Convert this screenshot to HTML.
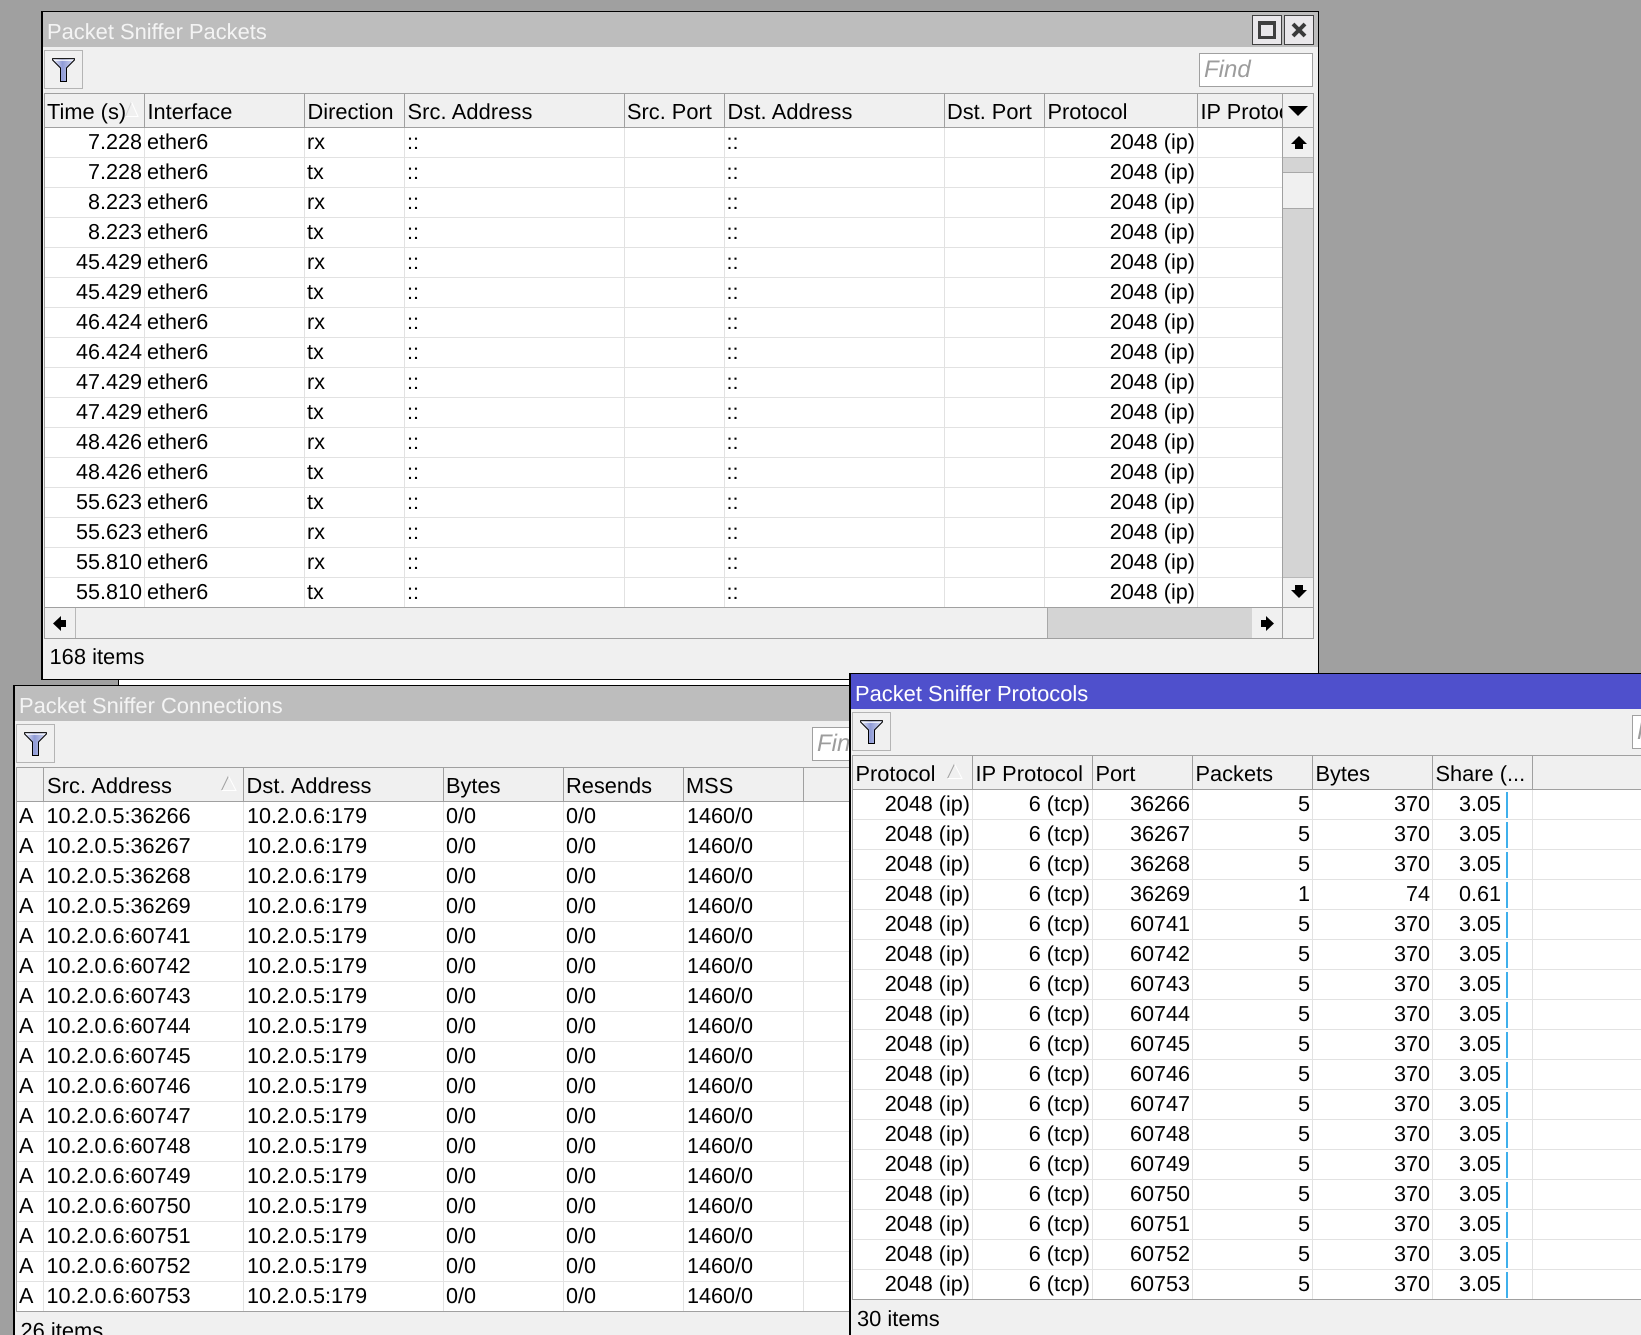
<!DOCTYPE html>
<html><head><meta charset="utf-8"><title>Packet Sniffer</title>
<style>
html{margin:0;padding:0;background:#a0a0a0;overflow:hidden;width:1641px;height:1335px}
body{margin:0;padding:0;background:#a0a0a0;position:relative;width:1641px;height:1335px;overflow:hidden;font:21.6px/30px "Liberation Sans",Arial,sans-serif;color:#000;text-rendering:geometricPrecision}
div,i,b,span,svg{position:absolute;display:block;box-sizing:border-box}
b{font-weight:normal;white-space:nowrap;top:0;line-height:28px}
i{font-style:normal}
.p{background:#f0f0f0}
.k{background:#000}
.tt{white-space:nowrap;font-size:21.9px}
.h{background:#f0f0f0;border-top:1px solid #a0a0a0;border-bottom:1px solid #a0a0a0}
.v{width:1px;background:#a0a0a0}
.l{width:1px;background:#e2e2e2}
.t{white-space:nowrap;line-height:30px}
.hd{font-size:21.8px}
.st{font-size:21.9px}
.ad{letter-spacing:.12px}
.w{background:#fff}
.r{height:30px;border-bottom:1px solid #e2e2e2}
.btn{width:39px;height:39px;border:1px solid #b4b4b4;background:#f0f0f0}
.f{background:#fff;border:1px solid #a0a0a0;overflow:hidden}
.f span{left:4px;top:1px;font-style:italic;font-size:24px;line-height:30px;color:#9c9c9c}
.a{left:45px;width:97px;text-align:right}.b{left:147px}.c{left:307px}.d{left:407px}.e{left:726.5px}.o1{left:1044px;width:151px;text-align:right}
.g{left:19px}.m{left:46.5px}.n{left:247px}.q{left:446px}.s{left:566px}.u{left:687px}
.pa{left:853px;width:117px;text-align:right}.pb{left:973px;width:117px;text-align:right}.pc{left:1093px;width:97px;text-align:right}.pd{left:1193px;width:117px;text-align:right}.pe{left:1313px;width:117px;text-align:right}.pf{left:1433px;width:68px;text-align:right}
.bar{left:1506px;top:2px;width:2px;height:26px;background:#3fb0ec}
</style></head><body>

<svg width="0" height="0" style="left:0;top:0"><defs>
<linearGradient id="fg" x1="0" x2="1" y1="0" y2="0"><stop offset="0" stop-color="#eceefa"/><stop offset=".45" stop-color="#8f9bd6"/><stop offset="1" stop-color="#d5daf1"/></linearGradient>
<symbol id="fi" viewBox="0 0 24 25"><path d="M.6.6H22.4V2L14.5 10V23.5H8.5V10L.6 2Z" fill="url(#fg)" stroke="#000" stroke-width="1"/><path d="M2 2.2H21" stroke="#fff" stroke-width="1.2"/></symbol>
</defs></svg>

<!-- WINDOW 1 -->
<div class="k" style="left:41px;top:11px;width:1278px;height:669px"></div>
<div class="p" style="left:43px;top:12px;width:1275px;height:667px"></div>
<div style="left:43px;top:12px;width:1275px;height:35px;background:#bdbdbd"></div>
<div class="t tt" style="left:47px;top:16.5px;color:#f4f4f4">Packet Sniffer Packets</div>
<div style="left:1252px;top:15px;width:30px;height:30px;background:#e9e7ea;border:1px solid #404040"></div>
<div style="left:1258px;top:21px;width:18px;height:18px;border:3px solid #3f3f3f;border-top-width:4px"></div>
<div style="left:1284px;top:15px;width:30px;height:30px;background:#e9e7ea;border:1px solid #404040"></div>
<svg style="left:1284px;top:15px" width="30" height="30"><path d="M9 9L21 21M21 9L9 21" stroke="#3a3a3a" stroke-width="4" fill="none"/></svg>
<div class="btn" style="left:44px;top:50px"></div>
<svg style="left:52px;top:58px" width="24" height="25"><use href="#fi"/></svg>
<div class="f" style="left:1199px;top:53px;width:114px;height:34px"><span>Find</span></div>

<div class="h" style="left:44px;top:93px;width:1270px;height:35px"></div>
<div class="v" style="left:44px;top:93px;height:515px"></div>
<div class="v" style="left:144px;top:93px;height:35px"></div>
<div class="v" style="left:304px;top:93px;height:35px"></div>
<div class="v" style="left:404px;top:93px;height:35px"></div>
<div class="v" style="left:624px;top:93px;height:35px"></div>
<div class="v" style="left:724px;top:93px;height:35px"></div>
<div class="v" style="left:944px;top:93px;height:35px"></div>
<div class="v" style="left:1044px;top:93px;height:35px"></div>
<div class="v" style="left:1197px;top:93px;height:35px"></div>
<div class="v" style="left:1282px;top:93px;height:515px"></div>
<div class="v" style="left:1313px;top:93px;height:546px"></div>
<div class="t hd" style="left:47px;top:96.5px">Time (s)</div>
<svg style="left:124px;top:100px" width="16" height="18"><path d="M1.5 16.5L7.5 2" stroke="#d4d4d4" fill="none"/><path d="M7.5 2L14 16.5H1.5" stroke="#fff" fill="none"/></svg>
<div class="t hd" style="left:147.5px;top:96.5px">Interface</div>
<div class="t hd" style="left:307.5px;top:96.5px">Direction</div>
<div class="t hd ad" style="left:407.5px;top:96.5px">Src. Address</div>
<div class="t hd" style="left:627px;top:96.5px">Src. Port</div>
<div class="t hd ad" style="left:727.5px;top:96.5px">Dst. Address</div>
<div class="t hd" style="left:947px;top:96.5px">Dst. Port</div>
<div class="t hd" style="left:1047.5px;top:96.5px">Protocol</div>
<div style="left:1200.5px;top:96.5px;width:81.5px;height:30px;overflow:hidden"><span class="t hd" style="left:0;top:0">IP Protocol</span></div>
<svg style="left:1288px;top:105px" width="20" height="12"><path d="M0 1H20L10 11Z" fill="#000"/></svg>

<div class="w" style="left:45px;top:128px;width:1237px;height:480px"></div>
<div class="r" style="left:45px;top:128px;width:1237px"></div>
<div class="r" style="left:45px;top:158px;width:1237px"></div><div class="r" style="left:45px;top:188px;width:1237px"></div><div class="r" style="left:45px;top:218px;width:1237px"></div><div class="r" style="left:45px;top:248px;width:1237px"></div><div class="r" style="left:45px;top:278px;width:1237px"></div><div class="r" style="left:45px;top:308px;width:1237px"></div><div class="r" style="left:45px;top:338px;width:1237px"></div><div class="r" style="left:45px;top:368px;width:1237px"></div><div class="r" style="left:45px;top:398px;width:1237px"></div><div class="r" style="left:45px;top:428px;width:1237px"></div><div class="r" style="left:45px;top:458px;width:1237px"></div><div class="r" style="left:45px;top:488px;width:1237px"></div><div class="r" style="left:45px;top:518px;width:1237px"></div><div class="r" style="left:45px;top:548px;width:1237px"></div>
<i class="l" style="left:144px;top:128px;height:480px"></i><i class="l" style="left:304px;top:128px;height:480px"></i><i class="l" style="left:404px;top:128px;height:480px"></i><i class="l" style="left:624px;top:128px;height:480px"></i><i class="l" style="left:724px;top:128px;height:480px"></i><i class="l" style="left:944px;top:128px;height:480px"></i><i class="l" style="left:1044px;top:128px;height:480px"></i><i class="l" style="left:1197px;top:128px;height:480px"></i>
<div style="left:0;top:128px;width:1282px;height:30px"><b class="a">7.228</b><b class="b">ether6</b><b class="c">rx</b><b class="d">::</b><b class="e">::</b><b class="o1">2048 (ip)</b></div>
<div style="left:0;top:158px;width:1282px;height:30px"><b class="a">7.228</b><b class="b">ether6</b><b class="c">tx</b><b class="d">::</b><b class="e">::</b><b class="o1">2048 (ip)</b></div>
<div style="left:0;top:188px;width:1282px;height:30px"><b class="a">8.223</b><b class="b">ether6</b><b class="c">rx</b><b class="d">::</b><b class="e">::</b><b class="o1">2048 (ip)</b></div>
<div style="left:0;top:218px;width:1282px;height:30px"><b class="a">8.223</b><b class="b">ether6</b><b class="c">tx</b><b class="d">::</b><b class="e">::</b><b class="o1">2048 (ip)</b></div>
<div style="left:0;top:248px;width:1282px;height:30px"><b class="a">45.429</b><b class="b">ether6</b><b class="c">rx</b><b class="d">::</b><b class="e">::</b><b class="o1">2048 (ip)</b></div>
<div style="left:0;top:278px;width:1282px;height:30px"><b class="a">45.429</b><b class="b">ether6</b><b class="c">tx</b><b class="d">::</b><b class="e">::</b><b class="o1">2048 (ip)</b></div>
<div style="left:0;top:308px;width:1282px;height:30px"><b class="a">46.424</b><b class="b">ether6</b><b class="c">rx</b><b class="d">::</b><b class="e">::</b><b class="o1">2048 (ip)</b></div>
<div style="left:0;top:338px;width:1282px;height:30px"><b class="a">46.424</b><b class="b">ether6</b><b class="c">tx</b><b class="d">::</b><b class="e">::</b><b class="o1">2048 (ip)</b></div>
<div style="left:0;top:368px;width:1282px;height:30px"><b class="a">47.429</b><b class="b">ether6</b><b class="c">rx</b><b class="d">::</b><b class="e">::</b><b class="o1">2048 (ip)</b></div>
<div style="left:0;top:398px;width:1282px;height:30px"><b class="a">47.429</b><b class="b">ether6</b><b class="c">tx</b><b class="d">::</b><b class="e">::</b><b class="o1">2048 (ip)</b></div>
<div style="left:0;top:428px;width:1282px;height:30px"><b class="a">48.426</b><b class="b">ether6</b><b class="c">rx</b><b class="d">::</b><b class="e">::</b><b class="o1">2048 (ip)</b></div>
<div style="left:0;top:458px;width:1282px;height:30px"><b class="a">48.426</b><b class="b">ether6</b><b class="c">tx</b><b class="d">::</b><b class="e">::</b><b class="o1">2048 (ip)</b></div>
<div style="left:0;top:488px;width:1282px;height:30px"><b class="a">55.623</b><b class="b">ether6</b><b class="c">tx</b><b class="d">::</b><b class="e">::</b><b class="o1">2048 (ip)</b></div>
<div style="left:0;top:518px;width:1282px;height:30px"><b class="a">55.623</b><b class="b">ether6</b><b class="c">rx</b><b class="d">::</b><b class="e">::</b><b class="o1">2048 (ip)</b></div>
<div style="left:0;top:548px;width:1282px;height:30px"><b class="a">55.810</b><b class="b">ether6</b><b class="c">rx</b><b class="d">::</b><b class="e">::</b><b class="o1">2048 (ip)</b></div>
<div style="left:0;top:578px;width:1282px;height:30px"><b class="a">55.810</b><b class="b">ether6</b><b class="c">tx</b><b class="d">::</b><b class="e">::</b><b class="o1">2048 (ip)</b></div>

<!-- v scrollbar -->
<div style="left:1283px;top:128px;width:30px;height:480px;background:#d4d4d4"></div>
<div class="p" style="left:1283px;top:128px;width:30px;height:30px;border-bottom:1px solid #b8b8b8"></div>
<svg style="left:1291px;top:136px" width="16" height="13"><path d="M8 0L16 8H12V13H4V8H0Z" fill="#000"/></svg>
<div class="p" style="left:1283px;top:172px;width:30px;height:37px;border-top:1px solid #a8a8a8;border-bottom:1px solid #a8a8a8"></div>
<div class="p" style="left:1283px;top:577px;width:30px;height:31px;border-top:1px solid #b8b8b8"></div>
<svg style="left:1291px;top:585px" width="16" height="13"><path d="M4 0H12V5H16L8 13L0 5H4Z" fill="#000"/></svg>
<!-- h scrollbar -->
<div class="v" style="left:44px;top:607px;width:1270px;height:1px"></div>
<div class="v" style="left:44px;top:638px;width:1270px;height:1px"></div>
<div class="v" style="left:44px;top:607px;height:32px"></div>
<div style="left:75px;top:608px;width:1px;height:30px;background:#b8b8b8"></div>
<svg style="left:53px;top:616px" width="13" height="15"><path d="M0 7.5L8 0V4H13V11H8V15Z" fill="#000"/></svg>
<div style="left:1047px;top:608px;width:205px;height:30px;background:#d4d4d4;border-left:1px solid #a8a8a8"></div>
<div style="left:1282px;top:608px;width:1px;height:30px;background:#a0a0a0"></div>
<svg style="left:1261px;top:616px" width="13" height="15"><path d="M13 7.5L5 0V4H0V11H5V15Z" fill="#000"/></svg>
<div class="t st" style="left:49.5px;top:642px">168 items</div>

<!-- gap strip behind -->
<div style="left:119px;top:680px;width:740px;height:6px;background:#fff"></div>
<div class="k" style="left:118px;top:680px;width:1px;height:6px"></div>

<!-- WINDOW 2 -->
<div class="k" style="left:13px;top:685px;width:860px;height:650px"></div>
<div class="p" style="left:15px;top:686px;width:858px;height:649px"></div>
<div style="left:15px;top:686px;width:858px;height:35px;background:#bdbdbd"></div>
<div class="t tt" style="left:19px;top:691px;color:#f4f4f4">Packet Sniffer Connections</div>
<div class="btn" style="left:16px;top:724px"></div>
<svg style="left:24px;top:732px" width="24" height="25"><use href="#fi"/></svg>
<div class="f" style="left:812px;top:727px;width:60px;height:34px"><span>Find</span></div>

<div class="h" style="left:16px;top:767px;width:850px;height:35px"></div>
<div class="v" style="left:16px;top:767px;height:545px"></div>
<div class="v" style="left:43px;top:767px;height:35px"></div>
<div class="v" style="left:243px;top:767px;height:35px"></div>
<div class="v" style="left:443px;top:767px;height:35px"></div>
<div class="v" style="left:563px;top:767px;height:35px"></div>
<div class="v" style="left:683px;top:767px;height:35px"></div>
<div class="v" style="left:803px;top:767px;height:35px"></div>
<div class="t hd ad" style="left:47px;top:771px">Src. Address</div>
<svg style="left:220px;top:774px" width="18" height="18"><path d="M1.5 16.5L8.5 2" stroke="#a0a0a0" fill="none"/><path d="M8.5 2L16 16.5H1.5" stroke="#fff" fill="none"/></svg>
<div class="t hd ad" style="left:246.5px;top:771px">Dst. Address</div>
<div class="t hd" style="left:446px;top:771px">Bytes</div>
<div class="t hd" style="left:566px;top:771px">Resends</div>
<div class="t hd" style="left:686px;top:771px">MSS</div>

<div class="w" style="left:17px;top:802px;width:850px;height:510px"></div>
<div class="r" style="left:17px;top:802px;width:850px"></div><div class="r" style="left:17px;top:832px;width:850px"></div><div class="r" style="left:17px;top:862px;width:850px"></div><div class="r" style="left:17px;top:892px;width:850px"></div><div class="r" style="left:17px;top:922px;width:850px"></div><div class="r" style="left:17px;top:952px;width:850px"></div><div class="r" style="left:17px;top:982px;width:850px"></div><div class="r" style="left:17px;top:1012px;width:850px"></div><div class="r" style="left:17px;top:1042px;width:850px"></div><div class="r" style="left:17px;top:1072px;width:850px"></div><div class="r" style="left:17px;top:1102px;width:850px"></div><div class="r" style="left:17px;top:1132px;width:850px"></div><div class="r" style="left:17px;top:1162px;width:850px"></div><div class="r" style="left:17px;top:1192px;width:850px"></div><div class="r" style="left:17px;top:1222px;width:850px"></div><div class="r" style="left:17px;top:1252px;width:850px"></div>
<i class="l" style="left:43px;top:802px;height:510px"></i><i class="l" style="left:243px;top:802px;height:510px"></i><i class="l" style="left:443px;top:802px;height:510px"></i><i class="l" style="left:563px;top:802px;height:510px"></i><i class="l" style="left:683px;top:802px;height:510px"></i><i class="l" style="left:803px;top:802px;height:510px"></i>
<div class="v" style="left:16px;top:1311px;width:850px;height:1px"></div>
<div style="left:0;top:802px;height:30px;width:840px"><b class="g">A</b><b class="m">10.2.0.5:36266</b><b class="n">10.2.0.6:179</b><b class="q">0/0</b><b class="s">0/0</b><b class="u">1460/0</b></div>
<div style="left:0;top:832px;height:30px;width:840px"><b class="g">A</b><b class="m">10.2.0.5:36267</b><b class="n">10.2.0.6:179</b><b class="q">0/0</b><b class="s">0/0</b><b class="u">1460/0</b></div>
<div style="left:0;top:862px;height:30px;width:840px"><b class="g">A</b><b class="m">10.2.0.5:36268</b><b class="n">10.2.0.6:179</b><b class="q">0/0</b><b class="s">0/0</b><b class="u">1460/0</b></div>
<div style="left:0;top:892px;height:30px;width:840px"><b class="g">A</b><b class="m">10.2.0.5:36269</b><b class="n">10.2.0.6:179</b><b class="q">0/0</b><b class="s">0/0</b><b class="u">1460/0</b></div>
<div style="left:0;top:922px;height:30px;width:840px"><b class="g">A</b><b class="m">10.2.0.6:60741</b><b class="n">10.2.0.5:179</b><b class="q">0/0</b><b class="s">0/0</b><b class="u">1460/0</b></div>
<div style="left:0;top:952px;height:30px;width:840px"><b class="g">A</b><b class="m">10.2.0.6:60742</b><b class="n">10.2.0.5:179</b><b class="q">0/0</b><b class="s">0/0</b><b class="u">1460/0</b></div>
<div style="left:0;top:982px;height:30px;width:840px"><b class="g">A</b><b class="m">10.2.0.6:60743</b><b class="n">10.2.0.5:179</b><b class="q">0/0</b><b class="s">0/0</b><b class="u">1460/0</b></div>
<div style="left:0;top:1012px;height:30px;width:840px"><b class="g">A</b><b class="m">10.2.0.6:60744</b><b class="n">10.2.0.5:179</b><b class="q">0/0</b><b class="s">0/0</b><b class="u">1460/0</b></div>
<div style="left:0;top:1042px;height:30px;width:840px"><b class="g">A</b><b class="m">10.2.0.6:60745</b><b class="n">10.2.0.5:179</b><b class="q">0/0</b><b class="s">0/0</b><b class="u">1460/0</b></div>
<div style="left:0;top:1072px;height:30px;width:840px"><b class="g">A</b><b class="m">10.2.0.6:60746</b><b class="n">10.2.0.5:179</b><b class="q">0/0</b><b class="s">0/0</b><b class="u">1460/0</b></div>
<div style="left:0;top:1102px;height:30px;width:840px"><b class="g">A</b><b class="m">10.2.0.6:60747</b><b class="n">10.2.0.5:179</b><b class="q">0/0</b><b class="s">0/0</b><b class="u">1460/0</b></div>
<div style="left:0;top:1132px;height:30px;width:840px"><b class="g">A</b><b class="m">10.2.0.6:60748</b><b class="n">10.2.0.5:179</b><b class="q">0/0</b><b class="s">0/0</b><b class="u">1460/0</b></div>
<div style="left:0;top:1162px;height:30px;width:840px"><b class="g">A</b><b class="m">10.2.0.6:60749</b><b class="n">10.2.0.5:179</b><b class="q">0/0</b><b class="s">0/0</b><b class="u">1460/0</b></div>
<div style="left:0;top:1192px;height:30px;width:840px"><b class="g">A</b><b class="m">10.2.0.6:60750</b><b class="n">10.2.0.5:179</b><b class="q">0/0</b><b class="s">0/0</b><b class="u">1460/0</b></div>
<div style="left:0;top:1222px;height:30px;width:840px"><b class="g">A</b><b class="m">10.2.0.6:60751</b><b class="n">10.2.0.5:179</b><b class="q">0/0</b><b class="s">0/0</b><b class="u">1460/0</b></div>
<div style="left:0;top:1252px;height:30px;width:840px"><b class="g">A</b><b class="m">10.2.0.6:60752</b><b class="n">10.2.0.5:179</b><b class="q">0/0</b><b class="s">0/0</b><b class="u">1460/0</b></div>
<div style="left:0;top:1282px;height:30px;width:840px"><b class="g">A</b><b class="m">10.2.0.6:60753</b><b class="n">10.2.0.5:179</b><b class="q">0/0</b><b class="s">0/0</b><b class="u">1460/0</b></div>
<div class="t st" style="left:20.5px;top:1316px">26 items</div>

<!-- WINDOW 3 -->
<div class="k" style="left:849px;top:673px;width:792px;height:662px"></div>
<div class="p" style="left:851px;top:674px;width:790px;height:661px"></div>
<div style="left:851px;top:674px;width:790px;height:35px;background:#4f50cc"></div>
<div class="t tt" style="left:855px;top:679px;color:#fff">Packet Sniffer Protocols</div>
<div class="btn" style="left:852px;top:712px"></div>
<svg style="left:860px;top:720px" width="24" height="25"><use href="#fi"/></svg>
<div class="f" style="left:1632px;top:715px;width:20px;height:34px"><span>Find</span></div>

<div class="h" style="left:852px;top:755px;width:789px;height:35px"></div>
<div class="v" style="left:852px;top:755px;height:545px"></div>
<div class="v" style="left:972px;top:755px;height:35px"></div>
<div class="v" style="left:1092px;top:755px;height:35px"></div>
<div class="v" style="left:1192px;top:755px;height:35px"></div>
<div class="v" style="left:1312px;top:755px;height:35px"></div>
<div class="v" style="left:1432px;top:755px;height:35px"></div>
<div class="v" style="left:1532px;top:755px;height:35px"></div>
<div class="t hd" style="left:855.5px;top:759px">Protocol</div>
<svg style="left:946px;top:762px" width="18" height="18"><path d="M1.5 16.5L8.5 2" stroke="#a0a0a0" fill="none"/><path d="M8.5 2L16 16.5H1.5" stroke="#fff" fill="none"/></svg>
<div class="t hd ad" style="left:975.5px;top:759px">IP Protocol</div>
<div class="t hd" style="left:1095.5px;top:759px">Port</div>
<div class="t hd" style="left:1195.5px;top:759px">Packets</div>
<div class="t hd" style="left:1315.5px;top:759px">Bytes</div>
<div class="t hd" style="left:1435.5px;top:759px">Share (...</div>

<div class="w" style="left:853px;top:790px;width:788px;height:510px"></div>
<div class="r" style="left:853px;top:790px;width:788px"></div><div class="r" style="left:853px;top:820px;width:788px"></div><div class="r" style="left:853px;top:850px;width:788px"></div><div class="r" style="left:853px;top:880px;width:788px"></div><div class="r" style="left:853px;top:910px;width:788px"></div><div class="r" style="left:853px;top:940px;width:788px"></div><div class="r" style="left:853px;top:970px;width:788px"></div><div class="r" style="left:853px;top:1000px;width:788px"></div><div class="r" style="left:853px;top:1030px;width:788px"></div><div class="r" style="left:853px;top:1060px;width:788px"></div><div class="r" style="left:853px;top:1090px;width:788px"></div><div class="r" style="left:853px;top:1120px;width:788px"></div><div class="r" style="left:853px;top:1150px;width:788px"></div><div class="r" style="left:853px;top:1180px;width:788px"></div><div class="r" style="left:853px;top:1210px;width:788px"></div><div class="r" style="left:853px;top:1240px;width:788px"></div>
<i class="l" style="left:972px;top:790px;height:510px"></i><i class="l" style="left:1092px;top:790px;height:510px"></i><i class="l" style="left:1192px;top:790px;height:510px"></i><i class="l" style="left:1312px;top:790px;height:510px"></i><i class="l" style="left:1432px;top:790px;height:510px"></i><i class="l" style="left:1532px;top:790px;height:510px"></i>
<div class="v" style="left:852px;top:1299px;width:789px;height:1px"></div>
<div style="left:0;top:790px;height:30px;width:1641px"><b class="pa">2048 (ip)</b><b class="pb">6 (tcp)</b><b class="pc">36266</b><b class="pd">5</b><b class="pe">370</b><b class="pf">3.05</b><i class="bar"></i></div>
<div style="left:0;top:820px;height:30px;width:1641px"><b class="pa">2048 (ip)</b><b class="pb">6 (tcp)</b><b class="pc">36267</b><b class="pd">5</b><b class="pe">370</b><b class="pf">3.05</b><i class="bar"></i></div>
<div style="left:0;top:850px;height:30px;width:1641px"><b class="pa">2048 (ip)</b><b class="pb">6 (tcp)</b><b class="pc">36268</b><b class="pd">5</b><b class="pe">370</b><b class="pf">3.05</b><i class="bar"></i></div>
<div style="left:0;top:880px;height:30px;width:1641px"><b class="pa">2048 (ip)</b><b class="pb">6 (tcp)</b><b class="pc">36269</b><b class="pd">1</b><b class="pe">74</b><b class="pf">0.61</b><i class="bar"></i></div>
<div style="left:0;top:910px;height:30px;width:1641px"><b class="pa">2048 (ip)</b><b class="pb">6 (tcp)</b><b class="pc">60741</b><b class="pd">5</b><b class="pe">370</b><b class="pf">3.05</b><i class="bar"></i></div>
<div style="left:0;top:940px;height:30px;width:1641px"><b class="pa">2048 (ip)</b><b class="pb">6 (tcp)</b><b class="pc">60742</b><b class="pd">5</b><b class="pe">370</b><b class="pf">3.05</b><i class="bar"></i></div>
<div style="left:0;top:970px;height:30px;width:1641px"><b class="pa">2048 (ip)</b><b class="pb">6 (tcp)</b><b class="pc">60743</b><b class="pd">5</b><b class="pe">370</b><b class="pf">3.05</b><i class="bar"></i></div>
<div style="left:0;top:1000px;height:30px;width:1641px"><b class="pa">2048 (ip)</b><b class="pb">6 (tcp)</b><b class="pc">60744</b><b class="pd">5</b><b class="pe">370</b><b class="pf">3.05</b><i class="bar"></i></div>
<div style="left:0;top:1030px;height:30px;width:1641px"><b class="pa">2048 (ip)</b><b class="pb">6 (tcp)</b><b class="pc">60745</b><b class="pd">5</b><b class="pe">370</b><b class="pf">3.05</b><i class="bar"></i></div>
<div style="left:0;top:1060px;height:30px;width:1641px"><b class="pa">2048 (ip)</b><b class="pb">6 (tcp)</b><b class="pc">60746</b><b class="pd">5</b><b class="pe">370</b><b class="pf">3.05</b><i class="bar"></i></div>
<div style="left:0;top:1090px;height:30px;width:1641px"><b class="pa">2048 (ip)</b><b class="pb">6 (tcp)</b><b class="pc">60747</b><b class="pd">5</b><b class="pe">370</b><b class="pf">3.05</b><i class="bar"></i></div>
<div style="left:0;top:1120px;height:30px;width:1641px"><b class="pa">2048 (ip)</b><b class="pb">6 (tcp)</b><b class="pc">60748</b><b class="pd">5</b><b class="pe">370</b><b class="pf">3.05</b><i class="bar"></i></div>
<div style="left:0;top:1150px;height:30px;width:1641px"><b class="pa">2048 (ip)</b><b class="pb">6 (tcp)</b><b class="pc">60749</b><b class="pd">5</b><b class="pe">370</b><b class="pf">3.05</b><i class="bar"></i></div>
<div style="left:0;top:1180px;height:30px;width:1641px"><b class="pa">2048 (ip)</b><b class="pb">6 (tcp)</b><b class="pc">60750</b><b class="pd">5</b><b class="pe">370</b><b class="pf">3.05</b><i class="bar"></i></div>
<div style="left:0;top:1210px;height:30px;width:1641px"><b class="pa">2048 (ip)</b><b class="pb">6 (tcp)</b><b class="pc">60751</b><b class="pd">5</b><b class="pe">370</b><b class="pf">3.05</b><i class="bar"></i></div>
<div style="left:0;top:1240px;height:30px;width:1641px"><b class="pa">2048 (ip)</b><b class="pb">6 (tcp)</b><b class="pc">60752</b><b class="pd">5</b><b class="pe">370</b><b class="pf">3.05</b><i class="bar"></i></div>
<div style="left:0;top:1270px;height:30px;width:1641px"><b class="pa">2048 (ip)</b><b class="pb">6 (tcp)</b><b class="pc">60753</b><b class="pd">5</b><b class="pe">370</b><b class="pf">3.05</b><i class="bar"></i></div>
<div class="t st" style="left:857px;top:1304px">30 items</div>
</body></html>
